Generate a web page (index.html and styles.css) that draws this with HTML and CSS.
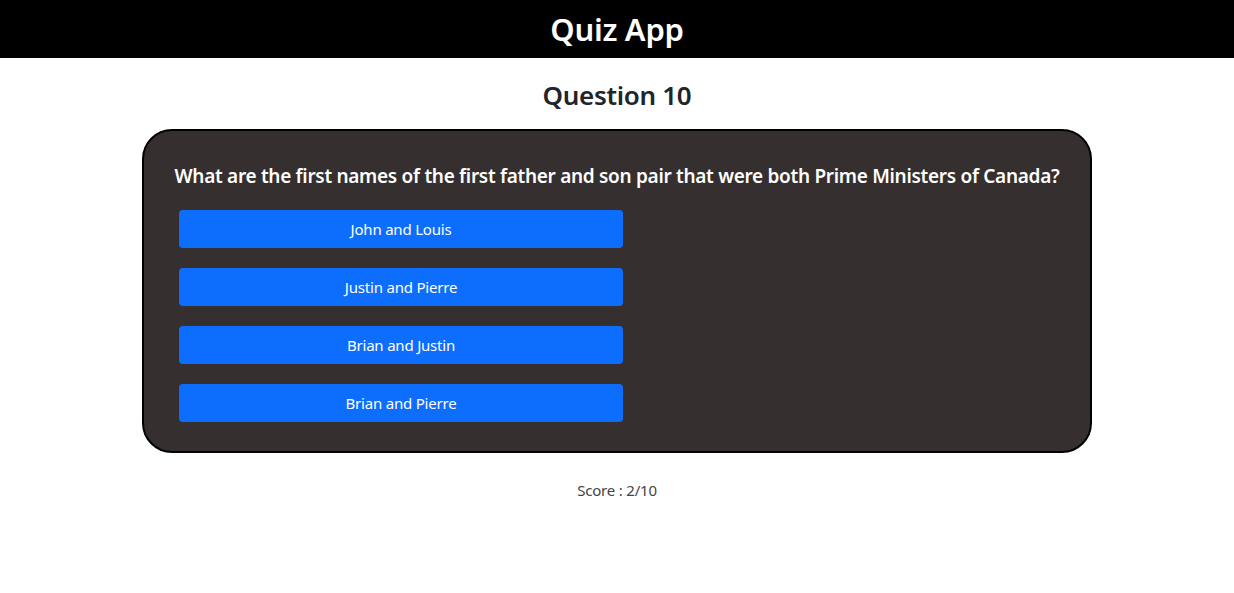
FILE: index.html
```html
<!DOCTYPE html>
<html lang="en">
<head>
<meta charset="utf-8">
<title>Quiz App</title>
<link rel="stylesheet" href="styles.css">
</head>
<body>
<header class="topbar"><h1 class="brand">Quiz App</h1></header>
<main class="main">
  <h2 class="qnum">Question 10</h2>
  <section class="card">
    <p class="question">What are the first names of the first father and son pair that were both Prime Ministers of Canada?</p>
    <div class="answers">
      <button class="answer">John and Louis</button>
      <button class="answer">Justin and Pierre</button>
      <button class="answer">Brian and Justin</button>
      <button class="answer">Brian and Pierre</button>
    </div>
  </section>
  <p class="score">Score : 2/10</p>
</main>
</body>
</html>
```
FILE: styles.css
```css
* { box-sizing: border-box; }
body {
  margin: 0;
  font-family: "Noto Sans", "Open Sans", sans-serif;
  background: #fff;
  color: #212529;
}
.topbar {
  background: #000;
  height: 58px;
  display: flex;
  align-items: center;
  justify-content: center;
}
.brand {
  margin: 0;
  color: #fff;
  font-size: 31px;
  font-weight: 600;
  letter-spacing: -0.3px;
}
.main {
  display: flex;
  flex-direction: column;
  align-items: center;
}
.qnum {
  margin: 19px 0 16px;
  font-size: 26px;
  font-weight: 600;
  color: #212529;
  letter-spacing: -0.3px;
}
.card {
  width: 950px;
  height: 324px;
  background: #352f2f;
  border: 2px solid #000;
  border-radius: 30px;
  padding: 32px 35px 0;
}
.question {
  margin: 0 -30px 21px;
  text-align: center;
  white-space: nowrap;
  color: #fff;
  font-size: 19px;
  font-weight: 600;
  letter-spacing: -0.3px;
}
.answers {
  display: flex;
  flex-direction: column;
  gap: 20px;
  width: 444px;
}
.answer {
  height: 38px;
  border: none;
  border-radius: 4px;
  background: #0d6efd;
  color: #fff;
  font-family: inherit;
  font-size: 15px;
  letter-spacing: -0.2px;
}
.score {
  margin: 27px 0 0;
  font-size: 15px;
  color: #444;
  letter-spacing: -0.2px;
}
```
